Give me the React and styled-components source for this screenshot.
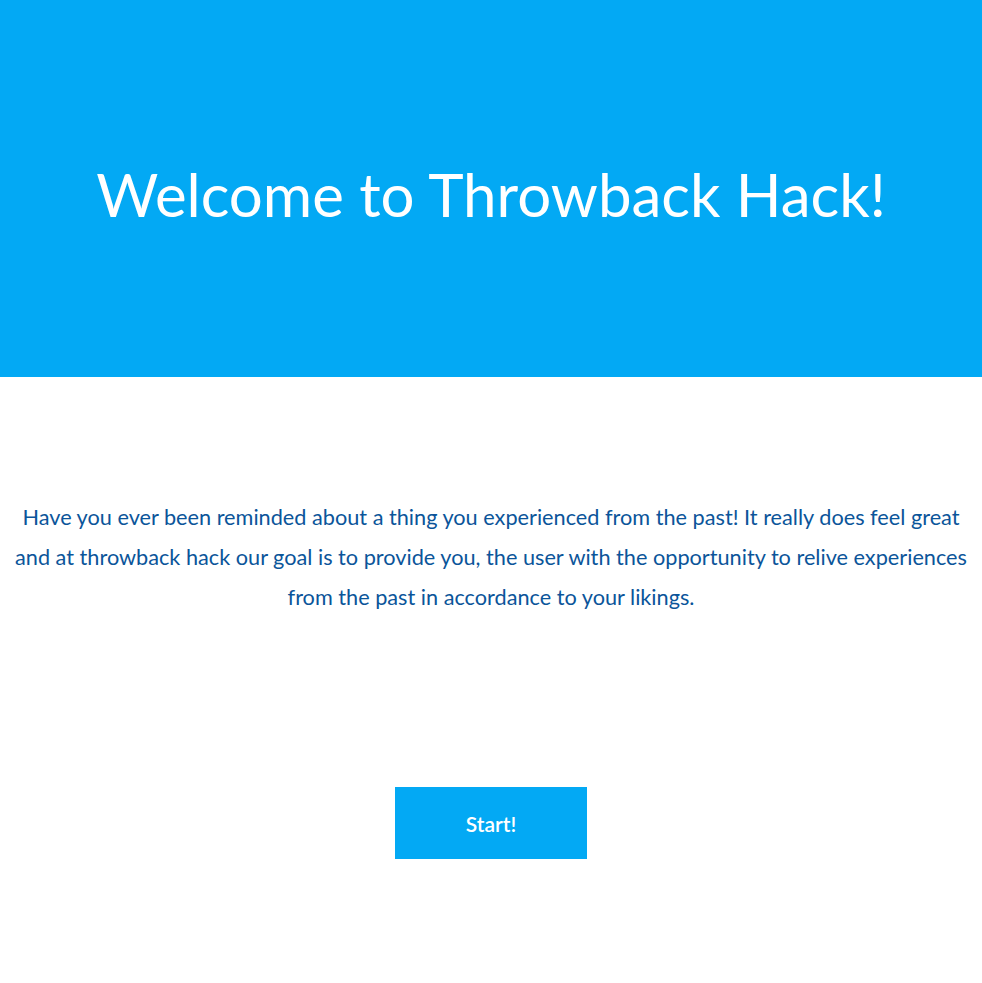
import styled, { createGlobalStyle } from 'styled-components';

const GlobalStyle = createGlobalStyle`
  body {
    margin: 0;
    font-family: Lato, "Open Sans", sans-serif;
    background-color: white;
  }
`;

const Header = styled.header`
  height: 377px;
  background-color: #03a9f4;
  display: flex;
  align-items: center;
  justify-content: center;
`;

const Title = styled.h1`
  margin: 0;
  margin-top: 10px;
  color: white;
  font-size: 60px;
  font-weight: 400;
`;

const Body = styled.main`
  display: flex;
  flex-flow: column nowrap;
  align-items: center;
  padding: 120px 10px 0;
`;

const Intro = styled.p`
  margin: 0;
  text-align: center;
  color: #0b559a;
  font-size: 21.7px;
  line-height: 40px;
`;

const StartButton = styled.button`
  margin-top: 170px;
  width: 192px;
  height: 72px;
  background-color: #03a9f4;
  color: white;
  border: none;
  font-family: Lato, sans-serif;
  font-size: 21px;
  font-weight: 600;
  cursor: pointer;
`;

function App() {
  return (
    <>
      <GlobalStyle />
      <Header>
        <Title>Welcome to Throwback Hack!</Title>
      </Header>
      <Body>
        <Intro>
          Have you ever been reminded about a thing you experienced from the past! It really does feel great
          and at throwback hack our goal is to provide you, the user with the opportunity to relive experiences
          from the past in accordance to your likings.
        </Intro>
        <StartButton>Start!</StartButton>
      </Body>
    </>
  );
}

export default App;
